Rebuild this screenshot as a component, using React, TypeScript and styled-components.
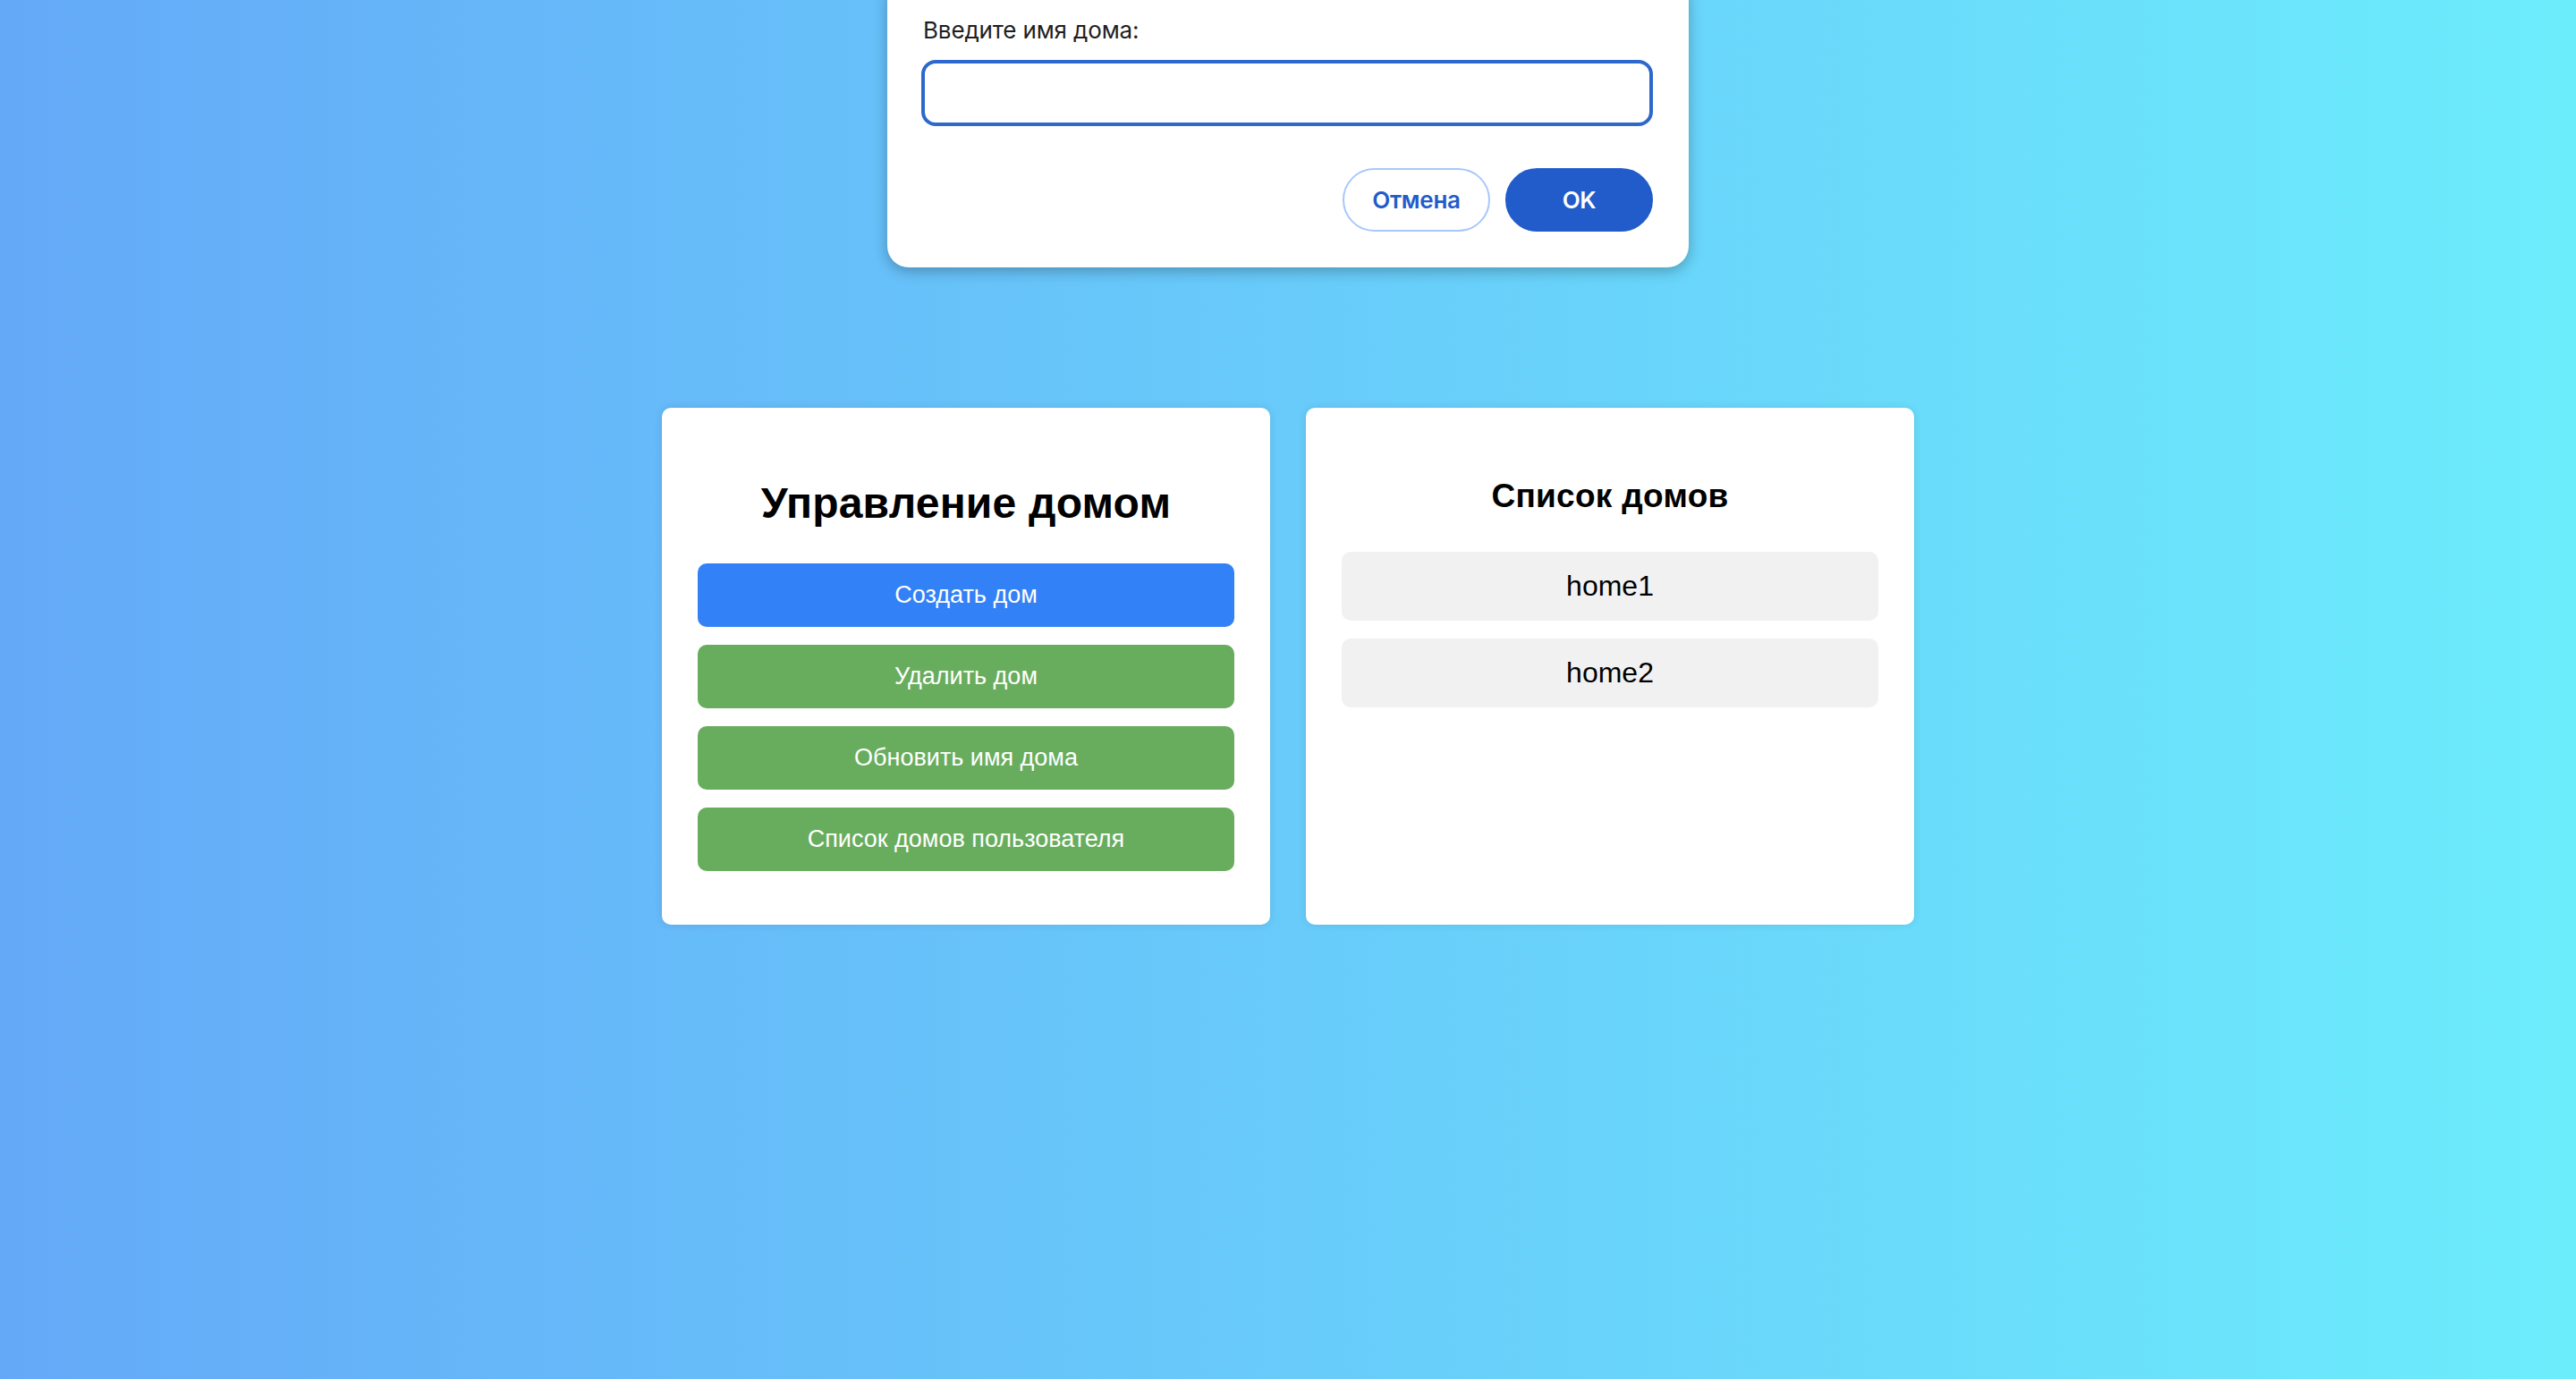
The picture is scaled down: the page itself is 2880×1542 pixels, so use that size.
import styled, { createGlobalStyle } from 'styled-components';

const GlobalStyle = createGlobalStyle`
  html,
  body {
    margin: 0;
    padding: 0;
  }

  body {
    min-height: 100vh;
    background: linear-gradient(to right, #64a9f8, #6cedfc);
    font-family: 'Liberation Sans', Arial, sans-serif;
  }

  * {
    box-sizing: border-box;
  }
`;

const homes = ['home1', 'home2'];

const actions = [
  { label: 'Создать дом', primary: true },
  { label: 'Удалить дом', primary: false },
  { label: 'Обновить имя дома', primary: false },
  { label: 'Список домов пользователя', primary: false },
];

const App = () => {
  return (
    <>
      <GlobalStyle />
      <Page>
        <PromptDialog>
          <PromptLabel htmlFor='home-name'>Введите имя дома:</PromptLabel>
          <PromptInput id='home-name' type='text' />
          <PromptActions>
            <DialogButton>Отмена</DialogButton>
            <DialogButton $primary>OK</DialogButton>
          </PromptActions>
        </PromptDialog>

        <Cards>
          <Card $bottom={60}>
            <CardTitle>Управление домом</CardTitle>
            <ActionList>
              {actions.map((a) => (
                <ActionButton key={a.label} $primary={a.primary}>
                  {a.label}
                </ActionButton>
              ))}
            </ActionList>
          </Card>

          <Card $bottom={40}>
            <ListTitle>Список домов</ListTitle>
            <HomeList>
              {homes.map((h) => (
                <HomeItem key={h}>{h}</HomeItem>
              ))}
            </HomeList>
          </Card>
        </Cards>
      </Page>
    </>
  );
};

const Page = styled.div`
  position: relative;
  min-height: 100vh;
  padding-top: 456px;
`;

// native-looking prompt() dialog, sits over the page
const PromptDialog = styled.div`
  position: absolute;
  top: -24px;
  left: 50%;
  transform: translateX(-50%);
  width: 896px;
  padding: 42px 40px 40px 38px;
  background: #ffffff;
  border-radius: 24px;
  box-shadow: 0 4px 16px rgba(0, 0, 0, 0.28);
  font-family: Inter, 'Noto Sans', sans-serif;
  display: flex;
  flex-direction: column;
`;

const PromptLabel = styled.label`
  display: block;
  padding-left: 2px;
  font-size: 26px;
  line-height: 32px;
  letter-spacing: -0.15px;
  color: #1f1f1f;
  margin-bottom: 17px;
`;

const PromptInput = styled.input`
  width: 100%;
  height: 74px;
  border: 4px solid #2d68cc;
  border-radius: 16px;
  outline: none;
  padding: 0 16px;
  font: inherit;
  font-size: 26px;
  background: #fff;
`;

const PromptActions = styled.div`
  display: flex;
  justify-content: flex-end;
  gap: 17px;
  margin-top: 47px;
`;

const DialogButton = styled.button<{ $primary?: boolean }>`
  width: 165px;
  height: 71px;
  border-radius: 36px;
  font-family: Inter, 'Noto Sans', sans-serif;
  font-size: 26px;
  font-weight: 600;
  letter-spacing: -0.3px;
  cursor: pointer;
  border: 2px solid ${(p) => (p.$primary ? '#225cca' : '#a8c7fa')};
  background: ${(p) => (p.$primary ? '#225cca' : '#ffffff')};
  color: ${(p) => (p.$primary ? '#ffffff' : '#225cca')};
`;

const Cards = styled.main`
  display: flex;
  justify-content: center;
  align-items: stretch;
  gap: 40px;
`;

const Card = styled.section<{ $bottom: number }>`
  width: 680px;
  min-height: 578px;
  padding: 40px 40px ${(p) => p.$bottom}px;
  background: #ffffff;
  border-radius: 10px;
  box-shadow: 0 0 10px rgba(0, 0, 0, 0.1);
  display: flex;
  flex-direction: column;
`;

const CardTitle = styled.h1`
  margin: 39px 0 39px;
  font-size: 48px;
  line-height: 56px;
  font-weight: 700;
  letter-spacing: 0.2px;
  text-align: center;
  color: #000;
`;

const ListTitle = styled.h2`
  margin: 38px 0 41px;
  font-size: 37px;
  line-height: 42px;
  font-weight: 700;
  letter-spacing: 0.3px;
  text-align: center;
  color: #000;
`;

const ActionList = styled.div`
  display: flex;
  flex-direction: column;
  gap: 20px;
`;

const ActionButton = styled.button<{ $primary?: boolean }>`
  height: 71px;
  width: 100%;
  border: none;
  border-radius: 10px;
  background: ${(p) => (p.$primary ? '#3381f6' : '#68ad5e')};
  color: #ffffff;
  font-family: 'Liberation Sans', Arial, sans-serif;
  font-size: 27px;
  cursor: pointer;
`;

const HomeList = styled.ul`
  list-style: none;
  margin: 0;
  padding: 0;
  display: flex;
  flex-direction: column;
  gap: 20px;
`;

const HomeItem = styled.li`
  height: 77px;
  display: flex;
  align-items: center;
  justify-content: center;
  background: #f1f1f1;
  border-radius: 10px;
  font-size: 32px;
  color: #000;
`;

export default App;
